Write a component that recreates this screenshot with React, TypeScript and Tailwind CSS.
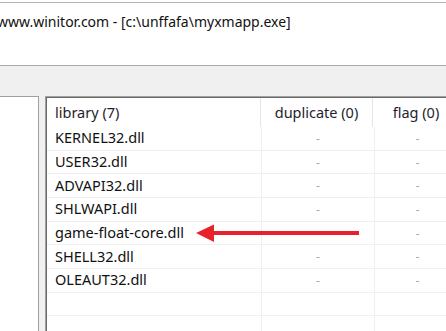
const rows = [
  'KERNEL32.dll',
  'USER32.dll',
  'ADVAPI32.dll',
  'SHLWAPI.dll',
  'game-float-core.dll',
  'SHELL32.dll',
  'OLEAUT32.dll',
  '',
  '',
]

export default function App() {
  return (
    <div
      className="relative w-[446px] h-[331px] overflow-hidden bg-white flex flex-col"
      style={{ fontFamily: '"Noto Sans", "Open Sans", sans-serif' }}
    >
      {/* clipped strip from the window above */}
      <div className="h-[3px] shrink-0 border-b border-[#b4b4b4] bg-white" />

      {/* title */}
      <div className="h-[63px] shrink-0 border-b border-[#a9a9a9] bg-white">
        <div className="-ml-[3px] pt-[9px] text-[14px] leading-[20px] text-[#111] whitespace-nowrap">
          www.winitor.com - [c:\unffafa\myxmapp.exe]
        </div>
      </div>

      {/* toolbar */}
      <div className="h-[30px] shrink-0 bg-[#f0f0f0]" />

      {/* main area */}
      <div className="flex-1 flex bg-[#f0f0f0] min-h-0">
        <div className="w-[39px] shrink-0 border-t border-r border-[#a0a0a0] bg-white" />
        <div className="w-[6px] shrink-0" />
        <div className="flex-1 border-t border-l border-[#a0a0a0] min-w-0">
          <div className="h-full border-t border-l border-[#696969] bg-white overflow-hidden">
            {/* header */}
            <div className="flex h-[29px] text-[14.5px] text-[#1e1e2e] whitespace-nowrap">
              <div className="w-[214px] shrink-0 pl-[8px] flex items-center border-r border-[#e5e5e5]">
                library (7)
              </div>
              <div className="w-[112px] shrink-0 flex items-center justify-center border-r border-[#e5e5e5]">
                duplicate (0)
              </div>
              <div className="w-[86px] shrink-0 flex items-center justify-center">flag (0)</div>
            </div>

            {/* rows */}
            {rows.map((name, i) => (
              <div
                key={i}
                className="flex h-[23.67px] border-b border-[#f0f0f0] text-[14.5px] text-[#111] whitespace-nowrap"
              >
                <div className="w-[214px] shrink-0 pl-[8px] flex items-center">{name}</div>
                <div className="w-[113px] shrink-0 flex items-center justify-center border-l border-[#f0f0f0] text-[11px] text-[#9a9a9a]">
                  {name ? '-' : ''}
                </div>
                <div className="w-[86px] shrink-0 flex items-center justify-center border-l border-[#f0f0f0] text-[11px] text-[#9a9a9a]">
                  {name ? '-' : ''}
                </div>
              </div>
            ))}
          </div>
        </div>
      </div>

      {/* arrow */}
      <svg className="absolute left-0 top-0" width="446" height="331" viewBox="0 0 446 331">
        <rect x="211" y="231" width="148" height="4" fill="#e8222a" />
        <polygon points="196,233 214,224.5 214,242" fill="#e8222a" />
      </svg>
    </div>
  )
}
